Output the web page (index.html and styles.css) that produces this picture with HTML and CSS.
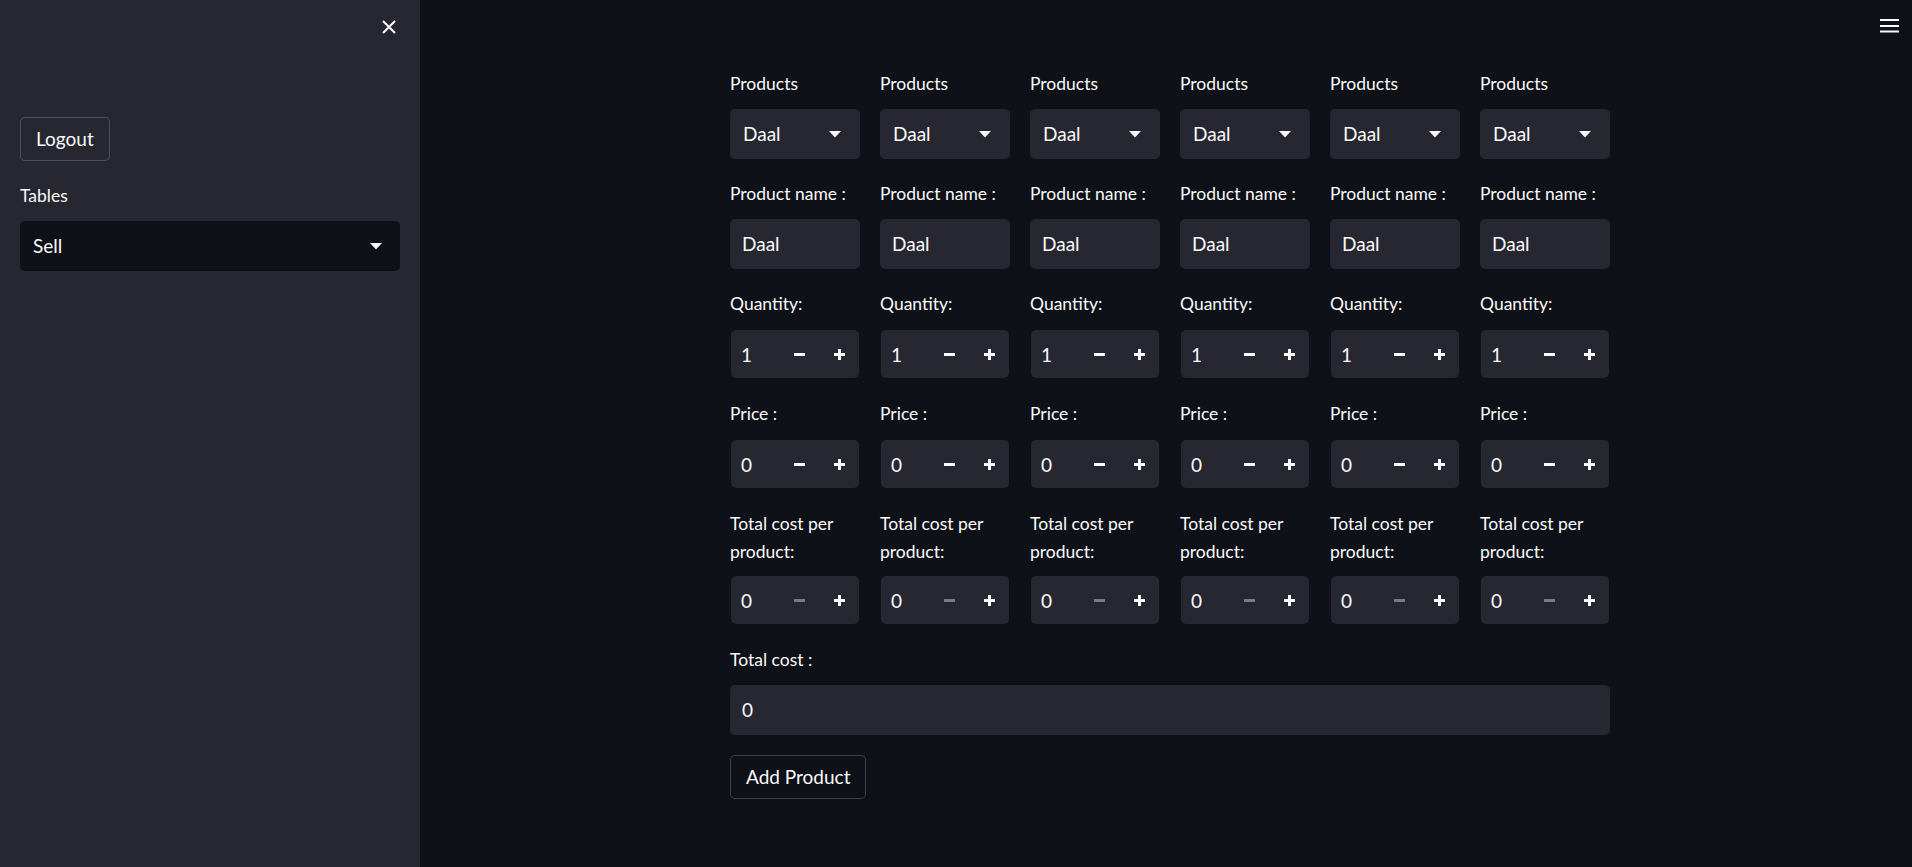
FILE: index.html
```html
<!DOCTYPE html>
<html lang="en">
<head>
<meta charset="utf-8">
<title>Sell</title>
<link rel="stylesheet" href="styles.css">
</head>
<body>
<div class="app">
  <aside class="sidebar">
    <div class="sidebar-top">
      <button class="icon-btn" aria-label="Close sidebar">
        <svg width="16" height="16" viewBox="0 0 16 16"><path d="M2 2L14 14M14 2L2 14" stroke="#fafafa" stroke-width="2" fill="none"/></svg>
      </button>
    </div>
    <div class="stack">
      <div><button class="btn">Logout</button></div>
      <div class="field">
        <div class="label">Tables</div>
        <div class="select select-dark"><span>Sell</span><svg class="caret" width="12" height="7" viewBox="0 0 12 7"><path d="M0 0H12L6 6.5Z" fill="#fafafa"/></svg></div>
      </div>
    </div>
  </aside>
  <main class="main">
    <div class="toolbar">
      <svg width="20" height="15" viewBox="0 0 20 15"><rect x="0" y="0" width="19" height="2" fill="#fafafa"/><rect x="0" y="6" width="19" height="2" fill="#fafafa"/><rect x="0" y="11.5" width="19" height="2" fill="#fafafa"/></svg>
    </div>
    <div class="container">
      <div class="columns" id="cols"></div>
      <div class="field">
        <div class="label">Total cost :</div>
        <div class="input"><span>0</span></div>
      </div>
      <div><button class="btn">Add Product</button></div>
    </div>
  </main>
</div>
<template id="col">
  <div class="col">
    <div class="field">
      <div class="label">Products</div>
      <div class="select"><span>Daal</span><svg class="caret" width="12" height="7" viewBox="0 0 12 7"><path d="M0 0H12L6 6.5Z" fill="#fafafa"/></svg></div>
    </div>
    <div class="field">
      <div class="label">Product name :</div>
      <div class="input"><span>Daal</span></div>
    </div>
    <div class="field">
      <div class="label">Quantity:</div>
      <div class="number-wrap"><div class="number"><span class="num-val">1</span><span class="step"><svg width="11" height="3" viewBox="0 0 11 3"><rect width="11" height="3" fill="#fafafa"/></svg></span><span class="step"><svg width="11" height="11" viewBox="0 0 11 11"><rect y="4" width="11" height="3" fill="#fafafa"/><rect x="4" width="3" height="11" fill="#fafafa"/></svg></span></div></div>
    </div>
    <div class="field">
      <div class="label">Price :</div>
      <div class="number-wrap"><div class="number"><span class="num-val">0</span><span class="step"><svg width="11" height="3" viewBox="0 0 11 3"><rect width="11" height="3" fill="#fafafa"/></svg></span><span class="step"><svg width="11" height="11" viewBox="0 0 11 11"><rect y="4" width="11" height="3" fill="#fafafa"/><rect x="4" width="3" height="11" fill="#fafafa"/></svg></span></div></div>
    </div>
    <div class="field">
      <div class="label">Total cost per product:</div>
      <div class="number-wrap"><div class="number"><span class="num-val">0</span><span class="step disabled"><svg width="11" height="3" viewBox="0 0 11 3"><rect width="11" height="3" fill="#fafafa"/></svg></span><span class="step"><svg width="11" height="11" viewBox="0 0 11 11"><rect y="4" width="11" height="3" fill="#fafafa"/><rect x="4" width="3" height="11" fill="#fafafa"/></svg></span></div></div>
    </div>
  </div>
</template>
<script>
  var t = document.getElementById('col');
  var c = document.getElementById('cols');
  for (var i = 0; i < 6; i++) c.appendChild(t.content.cloneNode(true));
</script>
</body>
</html>
```
FILE: styles.css
```css
* { box-sizing: border-box; }
html, body { margin: 0; padding: 0; }
body {
  background: #0e1117;
  color: #fafafa;
  font-family: "Lato", "Open Sans", sans-serif;
}
.app {
  display: flex;
  height: 867px;
  overflow: hidden;
}
.sidebar {
  width: 420px;
  flex: none;
  background: #262730;
  padding: 0 20px;
}
.sidebar-top {
  display: flex;
  justify-content: flex-end;
  padding-top: 18px;
  height: 117px;
  padding-right: 2px;
}
.icon-btn {
  background: none;
  border: 0;
  padding: 0;
  width: 18px;
  height: 18px;
  display: flex;
  align-items: center;
  justify-content: center;
  cursor: pointer;
}
.stack {
  display: flex;
  flex-direction: column;
  gap: 20px;
}
.main {
  flex: 1;
  position: relative;
  padding-left: 8px;
}
.toolbar {
  position: absolute;
  top: 19px;
  right: 12px;
  width: 20px;
  height: 15px;
}
.toolbar svg { display: block; }
.container {
  width: 880px;
  margin: 0 auto;
  padding-top: 69px;
  display: flex;
  flex-direction: column;
  gap: 20px;
}
.columns {
  display: grid;
  grid-template-columns: repeat(6, 1fr);
  gap: 20px;
}
.col {
  display: flex;
  flex-direction: column;
  gap: 20px;
  min-width: 0;
}
.field {
  display: flex;
  flex-direction: column;
}
.label {
  font-size: 17.5px;
  line-height: 28px;
  padding-top: 1px;
  min-height: 31px;
  margin-bottom: 9px;
  color: #fafafa;
}
.select, .input {
  height: 50px;
  border-radius: 5px;
  background: #262730;
  display: flex;
  align-items: center;
  font-size: 19px;
  line-height: 28px;
}
.select {
  padding: 0 19px 0 13px;
  justify-content: space-between;
}
.select-dark {
  background: #0e1117;
  padding: 0 18px 0 13px;
}
.caret { display: block; }
.input {
  padding: 0 12px;
}
.number-wrap {
  height: 50px;
  padding: 1px;
}
.number {
  height: 48px;
  border-radius: 5px;
  background: #262730;
  display: flex;
  align-items: center;
  font-size: 19px;
}
.num-val {
  flex: 1;
  padding-left: 10px;
}
.step {
  width: 40px;
  height: 48px;
  display: flex;
  align-items: center;
  justify-content: center;
}
.step svg { display: block; }
.step.disabled { opacity: 0.4; }
.btn {
  font-family: inherit;
  font-size: 19px;
  line-height: 32px;
  padding: 5px 15px;
  background: transparent;
  color: #fafafa;
  border: 1px solid rgba(250, 250, 250, 0.2);
  border-radius: 5px;
  cursor: pointer;
}
.main .btn { background: #0e1117; }
```
